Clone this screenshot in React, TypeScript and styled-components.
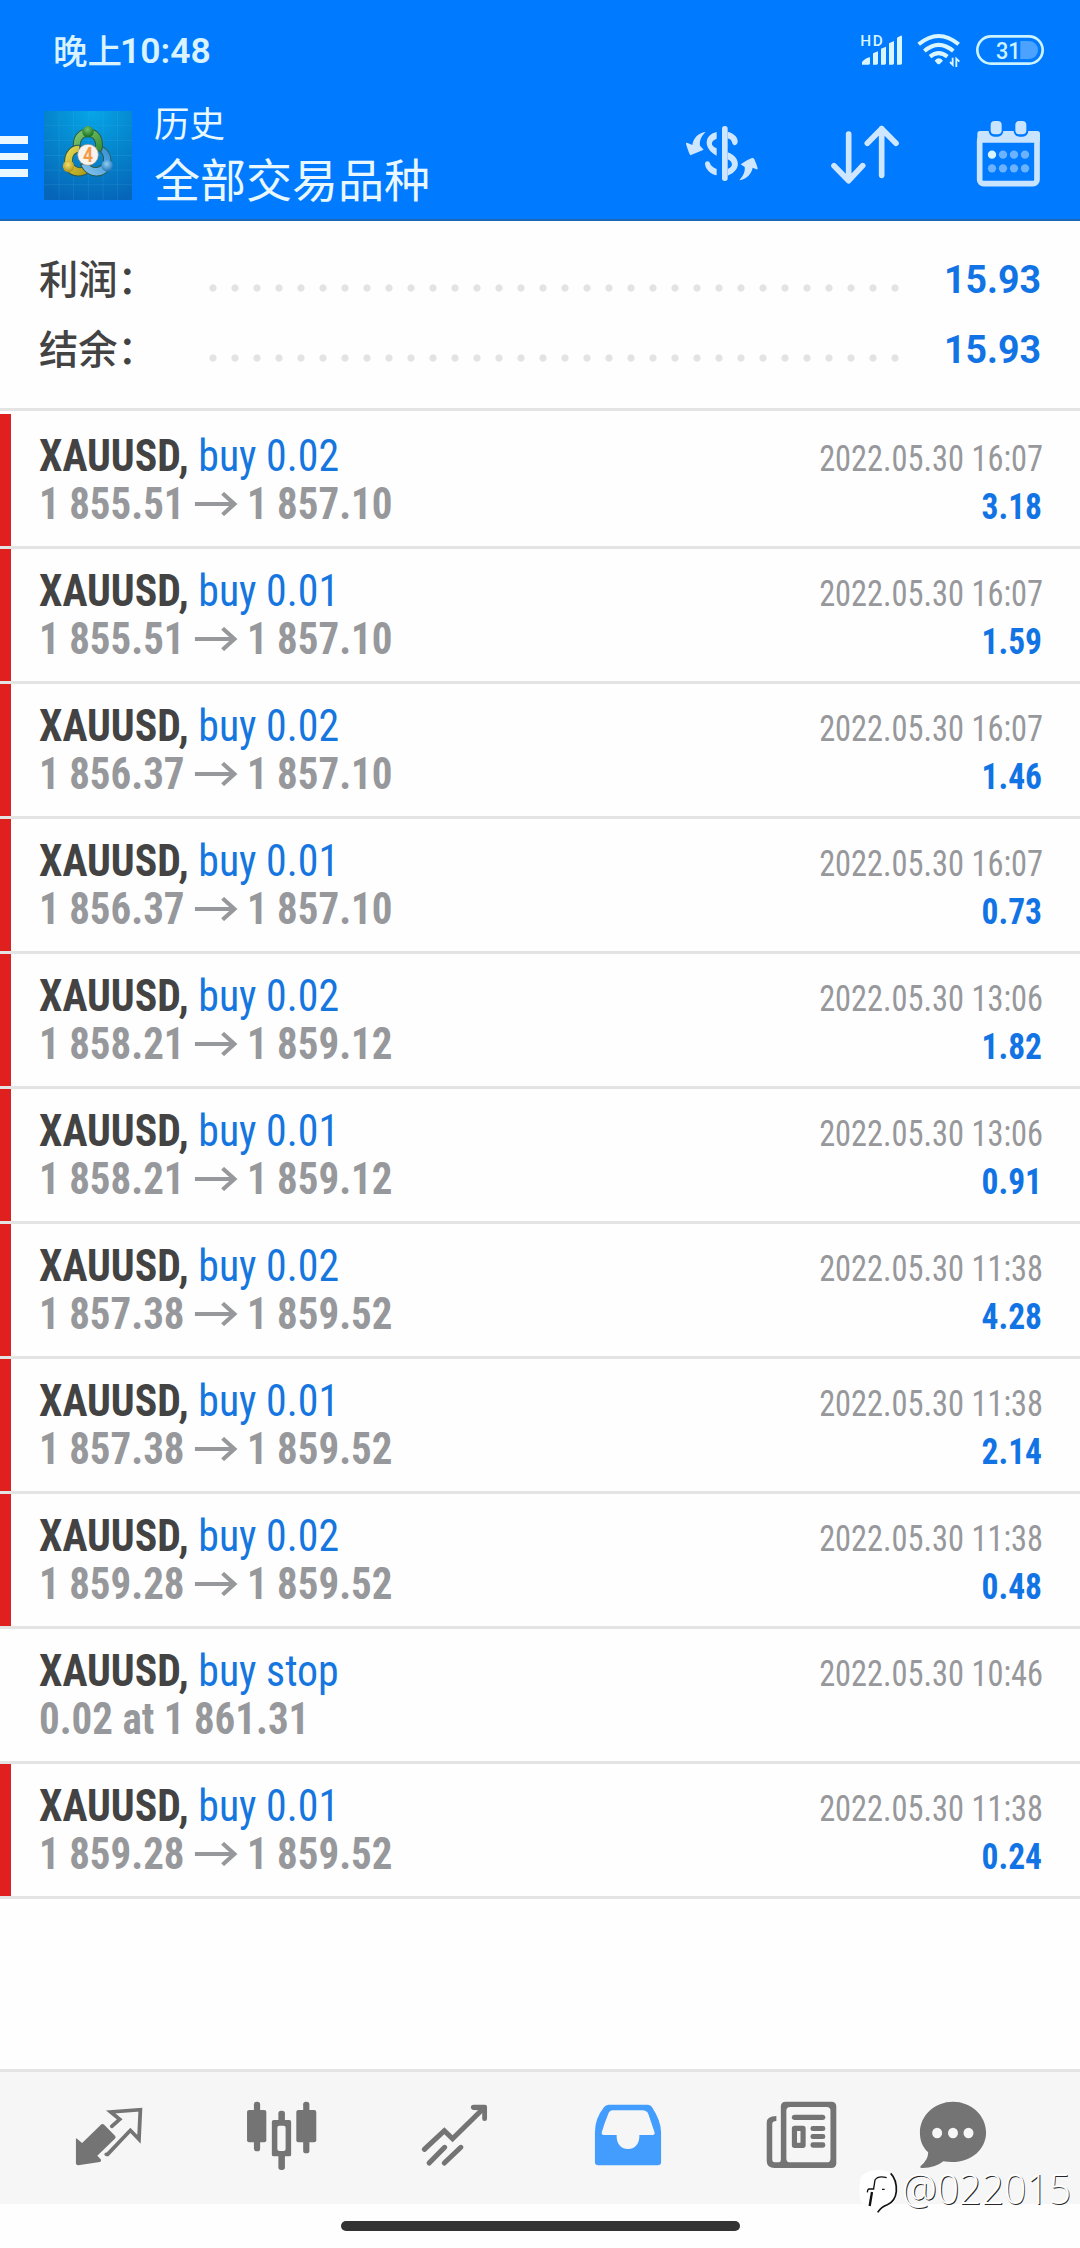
import React from 'react';
import styled, { createGlobalStyle } from 'styled-components';

const cjk = `"Noto Sans CJK SC", sans-serif`;
const condensed = `"Roboto Condensed", Roboto, "Noto Sans CJK SC", sans-serif`;

const GlobalStyle = createGlobalStyle`
  * { box-sizing: border-box; }
  body { margin: 0; background: #fefefe; }
  svg { display: block; flex: none; }
`;

const Screen = styled.div`
  position: relative;
  display: flex;
  flex-direction: column;
  width: 1080px;
  height: 2248px;
  background: #fefefe;
  overflow: hidden;
  font-family: ${condensed};
`;

const Header = styled.header`
  flex: none;
  height: 221px;
  background: #007aff;
  border-bottom: 2px solid #1a67b5;
  color: #e9f8ff;
`;

const StatusBar = styled.div`
  display: flex;
  align-items: center;
  justify-content: space-between;
  height: 100px;
  padding: 0 36px 0 53px;
`;

const Clock = styled.span`
  display: flex;
  align-items: center;
  font: 500 34.5px/40px ${cjk};
  color: #d9f3ff;
  margin-top: -2px;
`;

const ClockDigits = styled.span`
  font: 600 35.5px/40px Roboto, sans-serif;
  margin: 4px 0 0 -2px;
`;

const StatusIcons = styled.div`
  display: flex;
  align-items: center;
`;

const AppBar = styled.div`
  display: flex;
  align-items: center;
  height: 110px;
  padding-right: 39px;
`;

const MenuButton = styled.div`
  display: flex;
  flex-direction: column;
  gap: 9px;
  width: 44px;
  padding-top: 3px;
`;

const MenuBar = styled.span`
  width: 28px;
  height: 7.5px;
  background: #e9f8ff;
`;

const Titles = styled.div`
  flex: 1;
  align-self: flex-start;
  padding-left: 22px;
`;

const Subtitle = styled.div`
  font: 400 35.5px/44px ${cjk};
`;

const Title = styled.div`
  font: 400 46px/66px ${cjk};
`;

const Actions = styled.div`
  display: grid;
  grid-template-columns: 74px 68px 65px;
  column-gap: 72px;
  margin-top: -2px;
  & > :last-child { margin-left: 5px; }
  padding-right: 5px;
`;

const Summary = styled.section`
  flex: none;
  height: 190px;
  padding-top: 24px;
  border-bottom: 3px solid #e4e4e4;
  margin-bottom: 3px;
`;

const SummaryRow = styled.div`
  display: grid;
  grid-template-columns: 163px 704px 1fr;
  align-items: center;
  height: 70px;
  padding: 0 39px 0 39px;
`;

const SummaryLabel = styled.span`
  font: 500 39.3px/48px ${cjk};
  color: #434343;
  margin-top: -6px;
`;

const Dots = styled.span`
  height: 8px;
  margin-top: 15px;
  background: radial-gradient(circle at center, #e3e3e3 3.2px, transparent 4px) 0 0 / 22px 8px repeat-x;
`;

const SummaryValue = styled.span`
  font: 700 39.5px/48px Roboto, sans-serif;
  color: #1274e4;
  text-align: right;
  transform: scaleX(0.95);
  transform-origin: right;
`;

const List = styled.main`
  flex: 1;
`;

const Deal = styled.div<{ $closed: boolean }>`
  display: flex;
  justify-content: space-between;
  height: 135px;
  border-bottom: 3px solid #e4e4e4;
  padding: 0 37px 0 39px;
  background: linear-gradient(${p => (p.$closed ? '#e01f1f, #e01f1f' : 'transparent, transparent')}) 0 0 / 11px 132px no-repeat;
`;

const DealInfo = styled.div`
  padding-top: 18px;
`;

const DealLine = styled.div`
  display: flex;
  align-items: center;
  height: 48px;
  font-size: 44px;
  line-height: 48px;
  white-space: pre;
  transform: scaleX(0.95);
  transform-origin: left;
`;

const Symbol = styled.span`
  font-weight: 700;
  color: #434343;
`;

const Side = styled.span`
  color: #1576df;
`;

const Prices = styled(DealLine)`
  font-weight: 700;
  color: #97989b;
  transform: scaleX(0.931);
`;

const DealResult = styled.div`
  padding-top: 21px;
  font-size: 36px;
  line-height: 48px;
  text-align: right;
`;

const DealTime = styled.div`
  color: #97989b;
  transform: scaleX(0.899);
  transform-origin: right;
`;

const Profit = styled.div`
  padding-right: 1px;
  font-weight: 700;
  color: #1274e4;
  transform: scaleX(0.93);
  transform-origin: right;
`;

const TabBar = styled.nav`
  flex: none;
  display: flex;
  height: 135px;
  padding: 28px 0 0 22px;
  border-top: 3px solid #e4e4e4;
  background: #f6f6f6;
`;

const Tab = styled.div<{ $active?: boolean; $last?: boolean }>`
  display: flex;
  justify-content: center;
  width: ${p => (p.$last ? 132 : 173)}px;
  color: ${p => (p.$active ? '#429dff' : '#747474')};
`;

const HomeArea = styled.footer`
  flex: none;
  height: 44px;
  padding-top: 17px;
`;

const HomeBar = styled.div`
  width: 399px;
  height: 10px;
  margin: 0 auto;
  border-radius: 5px;
  background: #333;
`;

const Watermark = styled.div`
  position: absolute;
  left: 858px;
  top: 2168px;
  display: flex;
  align-items: flex-start;
`;

const WatermarkText = styled.span`
  font: 300 41.5px/48px "Open Sans", "Noto Sans", sans-serif;
  color: #fff;
  text-shadow: 1px 1px 0.5px rgba(0, 0, 0, 0.85);
  margin-left: 3px;
  margin-top: -4px;
  transform: scaleX(0.945);
  transform-origin: left;
`;

const Spacer = styled.span<{ $w: number }>`
  flex: none;
  width: ${p => p.$w}px;
`;

const AppLogo = () => (
  <svg width="88" height="89" viewBox="43 37 262 262" preserveAspectRatio="none">
    <defs>
      <radialGradient id="bg" cx="0.55" cy="0" r="1.05">
        <stop offset="0" stopColor="#06a6e8" />
        <stop offset="0.5" stopColor="#0585cc" />
        <stop offset="1" stopColor="#0665b8" />
      </radialGradient>
      <linearGradient id="gr" x1="0" y1="0" x2="1" y2="1">
        <stop offset="0" stopColor="#8fd07a" />
        <stop offset="1" stopColor="#2c8a2e" />
      </linearGradient>
      <linearGradient id="ye" x1="0" y1="0" x2="1" y2="1">
        <stop offset="0" stopColor="#e9e05c" />
        <stop offset="1" stopColor="#a99512" />
      </linearGradient>
      <linearGradient id="bl" x1="1" y1="0" x2="0" y2="1">
        <stop offset="0" stopColor="#2f8bd0" />
        <stop offset="1" stopColor="#8cc9f0" />
      </linearGradient>
      <radialGradient id="kg" cx="0.45" cy="0.3" r="0.7">
        <stop offset="0" stopColor="#6fc46a" />
        <stop offset="1" stopColor="#15691f" />
      </radialGradient>
      <radialGradient id="ky" cx="0.45" cy="0.35" r="0.7">
        <stop offset="0" stopColor="#f0e070" />
        <stop offset="1" stopColor="#a88a10" />
      </radialGradient>
      <radialGradient id="kb" cx="0.45" cy="0.35" r="0.7">
        <stop offset="0" stopColor="#8fd0f5" />
        <stop offset="1" stopColor="#1a6db5" />
      </radialGradient>
    </defs>
    <rect x="43" y="37" width="262" height="262" fill="url(#bg)" />
    <path d="M88 37V299M131 37V299M175 37V299M219 37V299M262 37V299M43 80H305M43 124H305M43 168H305M43 211H305M43 254H305" stroke="#45b4ea" strokeOpacity="0.28" strokeWidth="2" />
    <g stroke="#2d5a4a" strokeWidth="3">
      <path d="M132 152C124 112 146 90 174 90C206 90 224 116 215 158L196 150C200 126 190 112 174 112C158 112 148 126 152 146Z" fill="url(#gr)" />
      <path d="M150 138C122 136 100 160 105 196C108 218 126 230 150 228C164 226 172 222 176 216L164 200C148 210 128 200 128 182C128 168 136 160 148 158Z" fill="url(#ye)" />
      <path d="M218 142C238 154 246 176 240 200C232 226 200 236 176 222C162 214 156 204 152 194L176 192C188 210 216 206 220 184C222 172 218 164 212 158Z" fill="url(#bl)" />
    </g>
    <circle cx="174" cy="98" r="17" fill="url(#kg)" />
    <circle cx="116" cy="200" r="17" fill="url(#ky)" />
    <circle cx="231" cy="198" r="17" fill="url(#kb)" />
    <circle cx="174" cy="166" r="31" fill="#f7f3ef" stroke="#9a8f80" strokeWidth="2" />
    <text x="174" y="186" textAnchor="middle" fontFamily="Roboto, sans-serif" fontWeight="700" fontSize="58" textLength="30" lengthAdjust="spacingAndGlyphs" fill="#f39a48">4</text>
  </svg>
);

const SignalIcon = () => (
  <svg width="44" height="41" viewBox="660 88 132 123" fill="#d9f6ff">
    <text x="661" y="135" fontFamily="Roboto, sans-serif" fontWeight="500" fontSize="46" textLength="67" lengthAdjust="spacing">HD</text>
    <path d="M666 192V184Q676 172 690 170V188Q690 192 686 192ZM699 192V158L714 152V188Q714 192 710 192ZM723 192V144L738 138V188Q738 192 734 192ZM747 192V128L762 121V188Q762 192 758 192ZM771 192V111L782 105Q786 104 786 109V188Q786 192 782 192Z" />
  </svg>
);

const WifiIcon = () => (
  <svg width="44" height="36" viewBox="832 98 132 108" fill="none" stroke="#d9f6ff">
    <path d="M837 135Q897 85 957 135M854 155Q897 118 941 155M871 172Q897 151 923 172" strokeWidth="12" />
    <path d="M885 184Q897 170 910 184L901 193Q897 196 893 193Z" fill="#d9f6ff" stroke="none" />
    <path d="M931 188L939 196V175M950 203V178L959 187" strokeWidth="5.5" />
  </svg>
);

const BatteryIcon = () => (
  <svg width="68" height="30" viewBox="1008 105 204 90">
    <rect x="1012" y="109" width="196" height="82" rx="41" fill="none" stroke="#cdf3ff" strokeWidth="8" />
    <path d="M1141 123H1168A26 27 0 0 1 1168 177H1141Z" fill="#4ba3ff" />
    <text x="1068" y="177" fontFamily="Roboto, sans-serif" fontWeight="500" fontSize="70" textLength="74" lengthAdjust="spacingAndGlyphs" fill="#cdf3ff">31</text>
  </svg>
);

const CurrencyIcon = () => (
  <svg width="74" height="68" viewBox="15 15 222 204" fill="#cfe6ff">
    <rect x="126" y="33" width="17" height="165" rx="8" />
    <path d="M110 51C70 60 70 102 110 122V100C90 91 92 78 110 71Z" />
    <path d="M143 50C163 56 175 68 173 82C170 94 158 92 157 84C155 76 151 72 143 70Z" />
    <path d="M110 181C90 176 76 162 75 146C76 137 88 136 90 145C92 152 98 157 110 162Z" />
    <path fillRule="evenodd" d="M143 112C184 126 184 168 143 182ZM143 133V162C160 156 160 141 143 133Z" />
    <path d="M77 51C62 64 58 80 60 92L71 104L55 111L31 121Q27 116 18 87Q17 82 23 84L37 90C40 70 54 54 77 51Z" />
    <path d="M178 196C192 180 196 166 194 156L182 148Q200 134 216 129Q221 128 223 133Q229 146 233 160Q233 165 227 162L218 158C214 178 200 192 178 196Z" />
  </svg>
);

const SortIcon = () => (
  <svg width="68" height="68" viewBox="573 360 204 204" fill="none" stroke="#cfe6ff" strokeWidth="17" strokeLinecap="round" strokeLinejoin="round">
    <path d="M626 402V540M582 497L626 542L668 497M725 526V386M682 430L725 386L768 430" />
  </svg>
);

const CalendarIcon = () => (
  <svg width="65" height="68" viewBox="1008 360 195 204">
    <rect x="1019" y="410" width="172" height="141" rx="12" fill="none" stroke="#c9e4ff" strokeWidth="17" />
    <rect x="1012" y="393" width="188" height="35" rx="8" fill="#c9e4ff" />
    <rect x="1046" y="358" width="44" height="52" rx="17" fill="#007aff" />
    <rect x="1121" y="358" width="44" height="52" rx="17" fill="#007aff" />
    <rect x="1052" y="363" width="33" height="40" rx="12" fill="#c9e4ff" />
    <rect x="1126" y="363" width="33" height="40" rx="12" fill="#c9e4ff" />
    {[0, 1, 2, 3].map(i => (
      <React.Fragment key={i}>
        <circle cx={1056 + i * 33} cy="464" r="12.5" fill={i ? '#6bb2ff' : '#d9f6ff'} />
        <circle cx={1056 + i * 33} cy="505" r="12.5" fill="#6bb2ff" />
      </React.Fragment>
    ))}
  </svg>
);

const TabIcon = ({ x, children }: { x: number; children: React.ReactNode }) => (
  <svg width="72" height="70" viewBox={`${x} 150 209 210`} preserveAspectRatio="none" fill="currentColor">
    {children}
  </svg>
);

const QuotesIcon = () => (
  <TabIcon x={210.5}>
    <path d="M219 266Q220 264 222 266L237 279L293 223Q297 220 301 224L333 258Q336 262 332 266L281 317L291 328Q294 334 288 336L226 346Q219 346 219 340Z" />
    <path d="M323 229L346 208L320 186L406 179L402 268L377 241L311 313H307" fill="none" stroke="currentColor" strokeWidth="11" strokeLinejoin="miter" strokeLinecap="round" />
  </TabIcon>
);

const ChartsIcon = () => (
  <TabIcon x={713}>
    <rect x="736" y="155" width="18" height="149" rx="8" />
    <rect x="716" y="180" width="56" height="97" rx="6" />
    <rect x="879" y="155" width="18" height="155" rx="8" />
    <rect x="859" y="180" width="58" height="97" rx="6" />
    <rect x="807" y="182" width="19" height="40" rx="8" />
    <rect x="807" y="305" width="19" height="55" rx="8" />
    <path fillRule="evenodd" d="M794 210H839Q844 210 844 215V314Q844 319 839 319H794Q788 319 788 314V215Q788 210 794 210ZM810 227Q804 227 804 233V297Q804 303 810 303H822Q828 303 828 297V233Q828 227 822 227Z" />
  </TabIcon>
);

const TradeIcon = () => (
  <TabIcon x={1215.5}>
    <path d="M1231 298L1289 242L1313 266L1400 178M1245 339L1290 292M1289 339L1337 292" fill="none" stroke="currentColor" strokeWidth="15" strokeLinecap="round" />
    <path d="M1374 164H1407Q1413 164 1413 170V206Q1413 213 1406 213Q1399 213 1399 206V190L1390 181L1374 180Q1366 179 1366 172Q1366 164 1374 164Z" />
  </TabIcon>
);

const HistoryIcon = () => (
  <TabIcon x={149.5}>
    <path fillRule="evenodd" d="M198 164H312Q320 164 324 172Q350 214 350 246V336Q350 346 340 346H168Q158 346 158 336V246Q158 206 184 172Q189 164 198 164ZM210 181Q202 181 198 188Q186 218 178 246Q176 255 184 255H221C220 280 232 297 254 297C276 297 288 280 287 255H325Q333 255 331 247L313 192Q309 181 295 181Z" />
  </TabIcon>
);

const NewsIcon = () => (
  <TabIcon x={652}>
    <path fillRule="evenodd" d="M712 155H844Q859 155 859 169V340Q859 354 844 354H680Q657 354 657 334V218Q657 198 685 198V213Q673 213 673 222V328Q673 337 680 337H692Q698 337 698 330V169Q698 155 712 155ZM725 171Q714 171 714 182V326Q714 337 725 337H831Q842 337 842 326V182Q842 171 831 171Z" />
    <rect x="730" y="194" width="97" height="16" rx="8" />
    <path fillRule="evenodd" d="M738 227H762Q770 227 770 235V286Q770 294 762 294H738Q730 294 730 286V235Q730 227 738 227ZM745 243V278H755V243Z" />
    <rect x="784" y="228" width="43" height="15" rx="7" />
    <rect x="784" y="252" width="43" height="15" rx="7" />
    <rect x="784" y="277" width="43" height="16" rx="7" />
  </TabIcon>
);

const MessagesIcon = () => (
  <TabIcon x={1094.5}>
    <path fillRule="evenodd" d="M1199 155C1252 155 1295 196 1295 248C1295 302 1243 347 1171 334Q1146 355 1108 354Q1101 352 1106 347Q1127 330 1127 307C1111 292 1103 272 1103 248C1103 196 1146 155 1199 155ZM1153 233A14.500 16 0 1 0 1153 265A14.500 16 0 1 0 1153 233ZM1199 233A14.500 16 0 1 0 1199 265A14.500 16 0 1 0 1199 233ZM1244 233A14.500 16 0 1 0 1244 265A14.500 16 0 1 0 1244 233Z" />
  </TabIcon>
);

const WatermarkLogo = () => (
  <svg width="41" height="46" viewBox="24 24 123 138" fill="none">
    <path d="M30 60Q36 34 80 30Q140 28 142 92Q142 130 112 142Q98 150 88 156L84 146Q30 150 28 100Z" fill="#fff" />
    <path d="M122 40C134 52 140 72 139 94Q136 124 112 134Q94 140 83 157" stroke="#111" strokeWidth="5" />
    <path d="M110 53Q84 46 75 60L71 86M52 97Q53 86 58 87H73M96 88H104" stroke="#111" strokeWidth="4" />
    <path d="M66 96L59 138" stroke="#111" strokeWidth="7" />
  </svg>
);

const PriceArrow = () => (
  <svg width="47" height="24" viewBox="567 810 126 72" preserveAspectRatio="none" fill="none" stroke="#97989b" strokeWidth="12">
    <path d="M568 846H684M648 814L682 846L648 878" />
  </svg>
);

const deals = [
  ['buy 0.02', '1 855.51', '1 857.10', '2022.05.30 16:07', '3.18'],
  ['buy 0.01', '1 855.51', '1 857.10', '2022.05.30 16:07', '1.59'],
  ['buy 0.02', '1 856.37', '1 857.10', '2022.05.30 16:07', '1.46'],
  ['buy 0.01', '1 856.37', '1 857.10', '2022.05.30 16:07', '0.73'],
  ['buy 0.02', '1 858.21', '1 859.12', '2022.05.30 13:06', '1.82'],
  ['buy 0.01', '1 858.21', '1 859.12', '2022.05.30 13:06', '0.91'],
  ['buy 0.02', '1 857.38', '1 859.52', '2022.05.30 11:38', '4.28'],
  ['buy 0.01', '1 857.38', '1 859.52', '2022.05.30 11:38', '2.14'],
  ['buy 0.02', '1 859.28', '1 859.52', '2022.05.30 11:38', '0.48'],
  ['buy stop', '0.02 at 1 861.31', '', '2022.05.30 10:46', ''],
  ['buy 0.01', '1 859.28', '1 859.52', '2022.05.30 11:38', '0.24'],
];

const totals = [
  ['利润：', '15.93'],
  ['结余：', '15.93'],
];

export default function App() {
  return (
    <Screen>
      <GlobalStyle />
      <Header>
        <StatusBar>
          <Clock>
            晚上<ClockDigits>10:48</ClockDigits>
          </Clock>
          <StatusIcons>
            <SignalIcon />
            <Spacer $w={13} />
            <WifiIcon />
            <Spacer $w={15} />
            <BatteryIcon />
          </StatusIcons>
        </StatusBar>
        <AppBar>
          <MenuButton>
            <MenuBar />
            <MenuBar />
            <MenuBar />
          </MenuButton>
          <AppLogo />
          <Titles>
            <Subtitle>历史</Subtitle>
            <Title>全部交易品种</Title>
          </Titles>
          <Actions>
            <CurrencyIcon />
            <SortIcon />
            <CalendarIcon />
          </Actions>
        </AppBar>
      </Header>
      <Summary>
        {totals.map(([label, value]) => (
          <SummaryRow key={label}>
            <SummaryLabel>{label}</SummaryLabel>
            <Dots />
            <SummaryValue>{value}</SummaryValue>
          </SummaryRow>
        ))}
      </Summary>
      <List>
        {deals.map(([side, open, close, time, profit], i) => (
          <Deal key={i} $closed={close !== ''}>
            <DealInfo>
              <DealLine>
                <Symbol>XAUUSD, </Symbol>
                <Side>{side}</Side>
              </DealLine>
              <Prices>
                <span>{open}</span>
                {close && (
                  <>
                    <Spacer $w={11} />
                    <PriceArrow />
                    <Spacer $w={9} />
                    <span>{close}</span>
                  </>
                )}
              </Prices>
            </DealInfo>
            <DealResult>
              <DealTime>{time}</DealTime>
              <Profit>{profit}</Profit>
            </DealResult>
          </Deal>
        ))}
      </List>
      <TabBar>
        <Tab><QuotesIcon /></Tab>
        <Tab><ChartsIcon /></Tab>
        <Tab><TradeIcon /></Tab>
        <Tab $active><HistoryIcon /></Tab>
        <Tab><NewsIcon /></Tab>
        <Tab $last><MessagesIcon /></Tab>
      </TabBar>
      <HomeArea>
        <HomeBar />
      </HomeArea>
      <Watermark>
        <WatermarkLogo />
        <WatermarkText>@022015</WatermarkText>
      </Watermark>
    </Screen>
  );
}
